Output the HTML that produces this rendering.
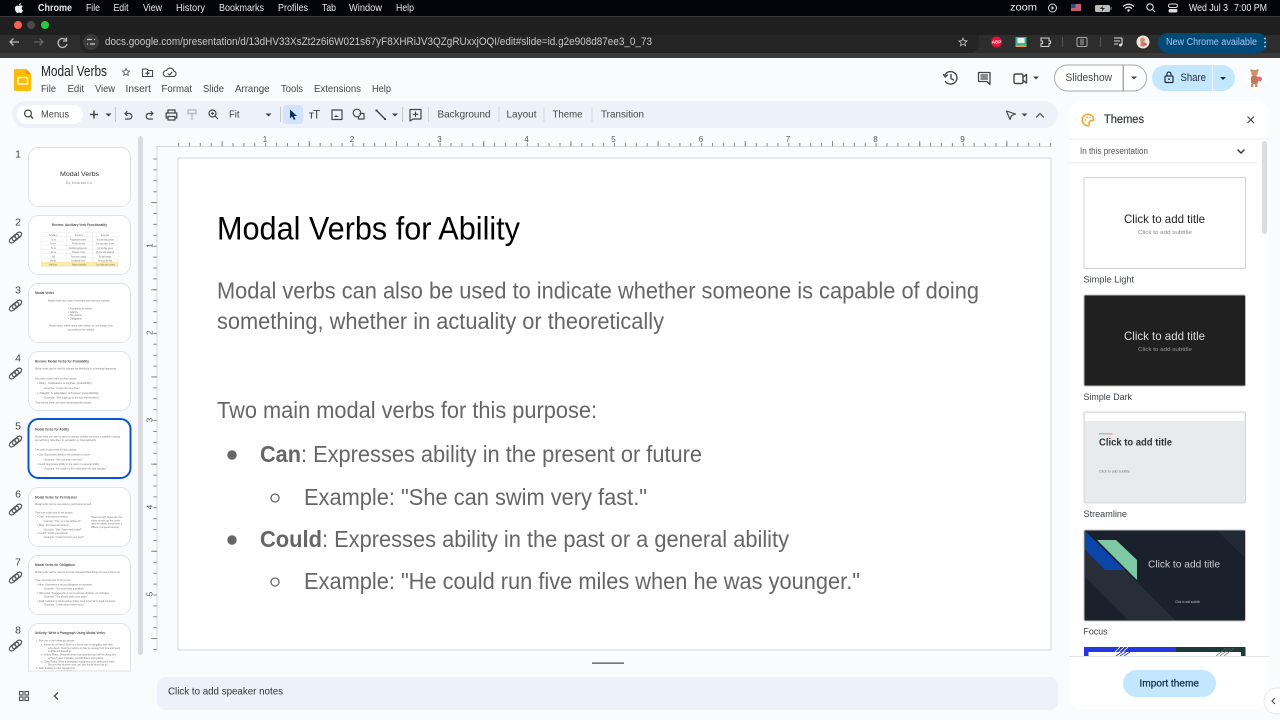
<!DOCTYPE html>
<html lang="en"><head><meta charset="utf-8"><title>Modal Verbs</title>
<style>
html,body{margin:0;padding:0;background:#f9fbfd;width:1280px;height:720px;overflow:hidden}
svg{display:block;filter:blur(.35px)}
text{font-family:"Liberation Sans",sans-serif;dominant-baseline:central;transform:translateY(.5px)}
.mb{font-size:10px;fill:#e8e8e8}
.m{font-size:10.5px;fill:#444746}
.t{font-size:10.5px;fill:#444746}
.th{font-size:2.8px;fill:#777}
.tb{font-size:3.2px;fill:#555;font-weight:bold}
.n{font-size:11px;fill:#444746}
.r{font-size:8px;fill:#555;transform:none}
.s{font-size:23px;fill:#666;transform:translateY(-.4px)}
.big{transform:translateY(-.4px)}
.l{font-size:9.5px;fill:#3c4043}
.ic{fill:none;stroke:#444746;stroke-width:1.2;stroke-linecap:round;stroke-linejoin:round}
.f{fill:#444746}
.med{stroke-width:.25px}
</style></head><body>
<svg width="1280" height="720" viewBox="0 0 1280 720" xmlns="http://www.w3.org/2000/svg">
<defs>
<g id="lnk" fill="none" stroke="#555" stroke-width="1.2"><ellipse cx="-2.8" cy="2.3" rx="3.8" ry="2.5" transform="rotate(-40 -2.8 2.3)"/><ellipse cx="0" cy="0" rx="3.8" ry="2.5" transform="rotate(-40)"/><ellipse cx="2.8" cy="-2.3" rx="3.8" ry="2.5" transform="rotate(-40 2.8 -2.3)"/></g>
<path id="car" d="M-3 -1.5L3 -1.5L0 1.5Z"/>
<clipPath id="c8"><rect x="28" y="623" width="103" height="48"/></clipPath>
<clipPath id="cs"><rect x="1070" y="165" width="190" height="491"/></clipPath>
</defs>

<!-- mac menu bar -->
<rect width="1280" height="16.5" fill="#04050b"/>
<rect y="16" width="1280" height="1" fill="#3a3a3a"/>
<path transform="translate(13 2) scale(.5)" fill="#eee" d="M18.71 19.5c-.83 1.24-1.71 2.45-3.05 2.47-1.34.03-1.77-.79-3.29-.79-1.53 0-2 .77-3.27.82-1.31.05-2.3-1.32-3.14-2.53C4.25 17 2.94 12.45 4.7 9.39c.87-1.52 2.43-2.48 4.12-2.51 1.28-.02 2.5.87 3.29.87.78 0 2.26-1.07 3.81-.91.65.03 2.47.26 3.64 1.98-.09.06-2.17 1.28-2.15 3.81.03 3.02 2.65 4.03 2.68 4.04-.03.07-.42 1.44-1.38 2.83M13 3.5c.73-.83 1.94-1.46 2.94-1.5.13 1.17-.34 2.35-1.04 3.19-.69.85-1.83 1.51-2.95 1.42-.15-1.15.41-2.35 1.05-3.11z"/>
<text class="mb" x="38" y="8" font-weight="bold" textLength="34" lengthAdjust="spacingAndGlyphs">Chrome</text>
<text class="mb" x="86" y="8" textLength="14" lengthAdjust="spacingAndGlyphs">File</text>
<text class="mb" x="113.500" y="8" textLength="15" lengthAdjust="spacingAndGlyphs">Edit</text>
<text class="mb" x="143" y="8" textLength="19" lengthAdjust="spacingAndGlyphs">View</text>
<text class="mb" x="176" y="8" textLength="29" lengthAdjust="spacingAndGlyphs">History</text>
<text class="mb" x="219" y="8" textLength="45" lengthAdjust="spacingAndGlyphs">Bookmarks</text>
<text class="mb" x="278" y="8" textLength="30" lengthAdjust="spacingAndGlyphs">Profiles</text>
<text class="mb" x="322" y="8" textLength="14" lengthAdjust="spacingAndGlyphs">Tab</text>
<text class="mb" x="349" y="8" textLength="33" lengthAdjust="spacingAndGlyphs">Window</text>
<text class="mb" x="396" y="8" textLength="18" lengthAdjust="spacingAndGlyphs">Help</text>
<text x="1010" y="7.500" font-size="10" fill="#eee" textLength="27" lengthAdjust="spacingAndGlyphs">zoom</text>
<circle cx="1052.500" cy="8" r="4" fill="none" stroke="#ddd"/><path d="M1051.500 6L1054.500 8L1051.500 10Z" fill="#ddd"/>
<rect x="1071" y="4" width="10" height="7" fill="#c06070"/><rect x="1071" y="4" width="4.500" height="4" fill="#334a80"/>
<rect x="1095" y="5" width="15" height="7" rx="1.500" fill="#bbb"/><rect x="1110.500" y="7" width="1" height="3" fill="#999"/><path d="M1103 5.500L1100 9H1102.500L1101.500 11.500L1105 8H1102.500Z" fill="#222"/>
<path d="M1123 6.500Q1128.500 2 1134 6.500M1125 8.500Q1128.500 5.500 1132 8.500" fill="none" stroke="#eee" stroke-width="1.200"/><circle cx="1128.500" cy="10.500" r="1.200" fill="#eee"/>
<circle cx="1150" cy="7" r="3.200" fill="none" stroke="#ddd" stroke-width="1.100"/><path d="M1152.500 9.500L1155 12" stroke="#ddd" stroke-width="1.200"/>
<rect x="1168.500" y="4" width="9" height="3.500" rx="1.700" fill="none" stroke="#ddd"/><rect x="1168.500" y="9" width="9" height="3.500" rx="1.700" fill="#ddd"/>
<text x="1189" y="8" font-size="10" fill="#eee" textLength="39" lengthAdjust="spacingAndGlyphs">Wed Jul 3</text>
<text x="1234" y="8" font-size="10" fill="#eee" textLength="33" lengthAdjust="spacingAndGlyphs">7:00 PM</text>

<!-- chrome -->
<rect y="17" width="1280" height="18" fill="#1f1f1f"/>
<rect y="35" width="1280" height="23" fill="#2d2d2d"/>
<rect y="53" width="1280" height="5" fill="#3a3a3a"/>
<circle cx="18" cy="25" r="4" fill="#ff5f57"/><circle cx="31" cy="25" r="4" fill="#4a4a4a"/><circle cx="45" cy="25" r="4" fill="#28c840"/>
<path d="M80 35H979V44A9 9 0 0 1 970 53H89A9 9 0 0 1 80 44Z" fill="#242424"/>
<path d="M19 42H10M13.500 38.500L10 42L13.500 45.500" fill="none" stroke="#bbb" stroke-width="1.300"/>
<path d="M34 42H43M39.500 38.500L43 42L39.500 45.500" fill="none" stroke="#666" stroke-width="1.300"/>
<path d="M66 40A4.500 4.500 0 1 0 67 44M66.500 37.500V41H63" fill="none" stroke="#bbb" stroke-width="1.300"/>
<circle cx="91" cy="42" r="8" fill="#3a3a3a"/><path d="M87 39.500H92M94 39.500H95M87 44H88M90 44H95" stroke="#ccc" stroke-width="1.200"/>
<text x="105" y="41.500" font-size="11" fill="#c8c8c8" textLength="547" lengthAdjust="spacingAndGlyphs">docs.google.com/presentation/d/13dHV33XsZt2z6i6W021s67yF8XHRiJV3QZgRUxxjOQI/edit#slide=id.g2e908d87ee3_0_73</text>
<path transform="translate(957 36) scale(.5)" fill="#ccc" d="M22 9.240l-7.190-.62L12 2 9.190 8.630 2 9.240l5.460 4.730L5.820 21 12 17.270 18.180 21l-1.630-7.030L22 9.240zM12 15.400l-3.760 2.270 1-4.280-3.320-2.880 4.380-.38L12 6.100l1.710 4.040 4.380.38-3.320 2.880 1 4.280L12 15.400z"/>
<circle cx="996.500" cy="42" r="5.500" fill="#e0143c"/><text x="996.500" y="41.500" font-size="4.500" font-weight="bold" fill="#fff" text-anchor="middle">ABP</text>
<rect x="1015.500" y="37" width="11" height="10" fill="#3bb58e"/><rect x="1017.500" y="38" width="7" height="5" fill="#dff5ea"/><rect x="1015.500" y="45.500" width="11" height="1.500" fill="#e8a040"/>
<path d="M1041 38H1049V41H1050.500V43.500H1049V46.500H1041V43.500H1042.500V41H1041Z" fill="none" stroke="#ccc" stroke-width="1.100"/>
<rect x="1062" y="37" width="1" height="10" fill="#555"/>
<rect x="1077" y="37.500" width="10" height="9" rx="1.500" fill="none" stroke="#aaa"/><path d="M1080 40H1084M1080 42H1084M1080 44H1084" stroke="#aaa"/>
<rect x="1100" y="37" width="1" height="10" fill="#555"/>
<path d="M1114 38H1122M1114 41H1120M1114 44H1118M1122 38V45" stroke="#ddd" stroke-width="1.100" fill="none"/><circle cx="1120.500" cy="45" r="1.500" fill="#ddd"/>
<circle cx="1143" cy="42" r="6.500" fill="#efe6dc"/><circle cx="1142.500" cy="40" r="2.500" fill="#c89770"/><rect x="1140.500" y="42" width="4.500" height="4.500" rx="1.500" fill="#c8806a"/><circle cx="1145.500" cy="44" r="1.300" fill="#e0506a"/>
<rect x="1158" y="33" width="109" height="20" rx="10" fill="#004a77"/>
<text x="1166" y="42" font-size="10" fill="#a8c7fa" textLength="91" lengthAdjust="spacingAndGlyphs">New Chrome available</text>
<circle cx="1265" cy="38.500" r=".9" fill="#cde"/><circle cx="1265" cy="42.500" r=".9" fill="#cde"/><circle cx="1265" cy="46.500" r=".9" fill="#cde"/>

<!-- app header -->
<rect y="58" width="1280" height="662" fill="#f9fbfd"/>
<path d="M16 69H26L31 74V89A2 2 0 0 1 29 91H16A2 2 0 0 1 14 89V71A2 2 0 0 1 16 69Z" fill="#fbbc04"/>
<path d="M26 69L31 74H26Z" fill="#f09300"/>
<rect x="18" y="77.500" width="9.500" height="6.500" fill="none" stroke="#fff" stroke-width="1.300"/>
<text x="41" y="71.500" font-size="14.500" fill="#1f1f1f" textLength="66" lengthAdjust="spacingAndGlyphs">Modal Verbs</text>
<path transform="translate(120.500 66.500) scale(.46)" fill="#444746" d="M22 9.240l-7.190-.62L12 2 9.190 8.630 2 9.240l5.460 4.730L5.820 21 12 17.270 18.180 21l-1.630-7.030L22 9.240zM12 15.400l-3.760 2.270 1-4.280-3.320-2.880 4.380-.38L12 6.100l1.710 4.040 4.380.38-3.320 2.880 1 4.280L12 15.400z"/>
<path class="ic" style="stroke-width:1.100" d="M142.500 69H147L148.500 70.500H152.500V76.500H142.500ZM147.500 71.500V75M145.800 73.200H149.300"/>
<path class="ic" style="stroke-width:1.100" d="M166 76.500H173.500A2.700 2.700 0 0 0 174 71.200A4 4 0 0 0 166.500 70.500A3 3 0 0 0 166 76.500ZM168 73.800L169.500 75L172 72.200"/>
<text class="m" x="41" y="88.500" textLength="15" lengthAdjust="spacingAndGlyphs">File</text>
<text class="m" x="67.500" y="88.500" textLength="16.500" lengthAdjust="spacingAndGlyphs">Edit</text>
<text class="m" x="95" y="88.500" textLength="20" lengthAdjust="spacingAndGlyphs">View</text>
<text class="m" x="125.500" y="88.500" textLength="25.500" lengthAdjust="spacingAndGlyphs">Insert</text>
<text class="m" x="161.500" y="88.500" textLength="30.500" lengthAdjust="spacingAndGlyphs">Format</text>
<text class="m" x="203" y="88.500" textLength="21" lengthAdjust="spacingAndGlyphs">Slide</text>
<text class="m" x="235" y="88.500" textLength="34.500" lengthAdjust="spacingAndGlyphs">Arrange</text>
<text class="m" x="281" y="88.500" textLength="22" lengthAdjust="spacingAndGlyphs">Tools</text>
<text class="m" x="314" y="88.500" textLength="47" lengthAdjust="spacingAndGlyphs">Extensions</text>
<text class="m" x="372" y="88.500" textLength="19" lengthAdjust="spacingAndGlyphs">Help</text>

<!-- header right -->
<path class="ic" style="stroke-width:1.400" d="M945 75A6.300 6.300 0 1 1 945.500 81.500M943.500 74.500L945.200 77L947.500 75M951 74.500V78.500L953.500 80"/>
<path class="ic" style="stroke-width:1.300" d="M978.500 72.500H990V84.500L987 81.500H978.500ZM981 75H987.500M981 77H987.500M981 79H987.500"/>
<rect x="1014" y="74" width="9" height="9.500" rx="1.500" class="ic" style="stroke-width:1.400"/><path class="ic" style="stroke-width:1.400" d="M1023 77L1026.500 74.500V83L1023 80.500"/>
<use href="#car" x="1036" y="78" fill="#444746"/>
<rect x="1054.500" y="65" width="92" height="26" rx="13" fill="#fff" stroke="#a5a8ab"/>
<rect x="1122.500" y="65" width="1.500" height="26" fill="#a5a8ab"/>
<text class="n" x="1065.500" y="77.500" textLength="46.500" lengthAdjust="spacingAndGlyphs">Slideshow</text>
<use href="#car" x="1134" y="78" fill="#444746"/>
<rect x="1152" y="65" width="83" height="26" rx="13" fill="#c2e7ff"/>
<rect x="1212" y="65" width="1" height="26" fill="#eaf6ff"/>
<rect x="1165" y="76" width="8" height="6.500" rx="1" fill="none" stroke="#1f2a33" stroke-width="1.200"/><path d="M1167 76V74A2 2 0 0 1 1171 74V76" fill="none" stroke="#1f2a33" stroke-width="1.200"/><circle cx="1169" cy="79.200" r=".9" fill="#1f2a33"/>
<text x="1180.500" y="77.500" font-size="11" fill="#1f2a33" textLength="25.500" lengthAdjust="spacingAndGlyphs">Share</text>
<use href="#car" x="1223" y="78.500" fill="#1f2a33"/>
<circle cx="1256" cy="78" r="11" fill="#fff"/>
<circle cx="1254.500" cy="73" r="3.300" fill="#c89568"/><circle cx="1251.500" cy="70.500" r="1.200" fill="#b9855a"/><circle cx="1257.500" cy="70.500" r="1.200" fill="#b9855a"/>
<rect x="1251" y="76" width="7" height="8" rx="2" fill="#c8765a"/><rect x="1251" y="84" width="2.500" height="3" fill="#c89568"/><rect x="1255" y="84" width="2.500" height="3" fill="#c89568"/>
<circle cx="1259.500" cy="79" r="2.500" fill="#ee6a80"/>

<!-- toolbar -->
<rect x="12" y="101" width="1046" height="27" rx="13.500" fill="#edf2fa"/>
<rect x="17" y="105" width="66" height="19" rx="9.500" fill="#fff"/>
<circle cx="28" cy="113.500" r="3.400" fill="none" stroke="#444746" stroke-width="1.200"/><path d="M30.500 116L33 118.500" stroke="#444746" stroke-width="1.400"/>
<text class="t" x="41" y="114" textLength="28" lengthAdjust="spacingAndGlyphs">Menus</text>
<path d="M90 114.500H98M94 110.500V118.500" stroke="#444746" stroke-width="1.500"/>
<use href="#car" x="108.500" y="115" fill="#444746"/>
<rect x="115" y="107" width="1" height="15" fill="#c7c7c7"/>
<path class="ic" d="M125 113.500H129.500A2.800 2.800 0 0 1 129.500 119H125.500M125 113.500L127 111.500M125 113.500L127 115.500"/>
<path class="ic" d="M153 113.500H148.500A2.800 2.800 0 0 0 148.500 119H152.500M153 113.500L151 111.500M153 113.500L151 115.500"/>
<path class="ic" style="stroke-width:1.300" d="M168 113V110H175V113M168 118H166.200V113H176.800V118H175M168 116.500H175V120H168Z"/>
<path d="M188 110H196V113.500H188ZM192 113.500V115.500M192 115.500V120" fill="none" stroke="#b9bcbf" stroke-width="1.400"/>
<circle cx="212.500" cy="113.500" r="3.500" fill="none" stroke="#444746" stroke-width="1.200"/><path d="M215 116L218 119M211 113.500H214M212.500 112V115" stroke="#444746" stroke-width="1.100"/>
<text class="t" x="229" y="114" textLength="10.500" lengthAdjust="spacingAndGlyphs">Fit</text>
<use href="#car" x="268.500" y="115" fill="#444746"/>
<rect x="280" y="107" width="1" height="15" fill="#c7c7c7"/>
<rect x="283" y="105" width="20" height="19" rx="3" fill="#d3e3fd"/>
<path d="M290 109.500V118.500L292 116.500L294 120L295.500 119L293.800 116H297Z" fill="#0b2f5e"/>
<text x="309" y="115.500" font-size="8" font-weight="bold" fill="#444746">T</text><text x="313" y="114" font-size="12" fill="#444746">T</text>
<rect x="332" y="110" width="10" height="9.500" class="ic"/><path d="M334 117L336 115L338 116.500L340 117Z" fill="#444746"/>
<circle cx="357" cy="113" r="3.800" class="ic"/><path class="ic" d="M360 113.500H364V119H358.500V116.500"/>
<path d="M376.500 110.500L385 119" stroke="#444746" stroke-width="1.500"/><rect x="375.500" y="109.500" width="2" height="2" fill="#444746"/><rect x="384" y="118" width="2" height="2" fill="#444746"/>
<use href="#car" x="395" y="115" fill="#444746"/>
<rect x="402" y="107" width="1" height="15" fill="#c7c7c7"/>
<path class="ic" d="M410 109.500H421V119H413L410 121ZM415.500 112V116.500M413.200 114.300H417.800"/>
<rect x="428" y="107" width="1" height="15" fill="#d5d6d8"/>
<text class="t" x="437.500" y="114" textLength="53" lengthAdjust="spacingAndGlyphs">Background</text>
<rect x="498.500" y="107" width="1" height="15" fill="#d5d6d8"/>
<text class="t" x="506.500" y="114" textLength="30" lengthAdjust="spacingAndGlyphs">Layout</text>
<rect x="543.500" y="107" width="1" height="15" fill="#d5d6d8"/>
<text class="t" x="552.500" y="114" textLength="30" lengthAdjust="spacingAndGlyphs">Theme</text>
<rect x="591.500" y="107" width="1" height="15" fill="#d5d6d8"/>
<text class="t" x="601" y="114" textLength="43" lengthAdjust="spacingAndGlyphs">Transition</text>
<path class="ic" style="stroke-width:1.100" d="M1006.500 111L1015.500 114L1011.500 115.500L1010 119.500Z"/>
<use href="#car" x="1024.500" y="115" fill="#444746"/>
<path class="ic" d="M1036.500 117L1040 113.500L1043.500 117"/>

<!-- filmstrip -->
<rect x="138" y="136" width="5" height="519" rx="2.500" fill="#dadce0"/>
<g text-anchor="middle">
<text x="18" y="154" font-size="10.500" fill="#444746">1</text><text x="18" y="222" font-size="10.500" fill="#444746">2</text><text x="18" y="290" font-size="10.500" fill="#444746">3</text><text x="18" y="358" font-size="10.500" fill="#444746">4</text><text x="18" y="426" font-size="10.500" fill="#444746">5</text><text x="18" y="494" font-size="10.500" fill="#444746">6</text><text x="18" y="562" font-size="10.500" fill="#444746">7</text><text x="18" y="630" font-size="10.500" fill="#444746">8</text>
</g>
<use href="#lnk" x="15.500" y="237.500"/><use href="#lnk" x="15.500" y="305.500"/><use href="#lnk" x="15.500" y="373.500"/><use href="#lnk" x="15.500" y="441.500"/><use href="#lnk" x="15.500" y="509.500"/><use href="#lnk" x="15.500" y="577.500"/><use href="#lnk" x="15.500" y="645.500"/>

<g fill="#fff" stroke="#dfe1e4">
<rect x="28.500" y="147.500" width="102" height="59" rx="10"/>
<rect x="28.500" y="215.500" width="102" height="59" rx="10"/>
<rect x="28.500" y="283.500" width="102" height="59" rx="10"/>
<rect x="28.500" y="351.500" width="102" height="59" rx="10"/>
<rect x="28.500" y="487.500" width="102" height="59" rx="10"/>
<rect x="28.500" y="555.500" width="102" height="59" rx="10"/>
<path d="M28.500 671V633.500A10 10 0 0 1 38.500 623.500H120.500A10 10 0 0 1 130.500 633.500V671Z"/>
</g>
<rect x="28.500" y="419" width="102" height="59" rx="10" fill="#fff" stroke="#0b57d0" stroke-width="2"/>

<!-- thumb 1 -->
<text x="60" y="174" font-size="6.700" fill="#333" textLength="39" lengthAdjust="spacingAndGlyphs">Modal Verbs</text>
<text x="66" y="182.500" font-size="3.200" fill="#999" textLength="26" lengthAdjust="spacingAndGlyphs">By Miranda Cu</text>
<!-- thumb 2 -->
<text class="tb" x="52" y="224.500" textLength="55" lengthAdjust="spacingAndGlyphs">Review: Auxiliary Verb Functionality</text>
<rect x="41" y="262" width="77" height="4.500" fill="#ffeb9c"/>
<path d="M41 232.500H118M41 236.700H118M41 241H118M41 245.200H118M41 249.500H118M41 253.700H118M41 258H118M41 262H118M41 266.500H118M41 232.500V266.500M66.500 232.500V266.500M92.500 232.500V266.500M118 232.500V266.500" stroke="#e8e8e8" stroke-width=".5" fill="none"/>
<g>
<text class="th" x="49" y="234.600" textLength="8" lengthAdjust="spacingAndGlyphs">Auxiliary</text><text class="th" x="75" y="234.600" textLength="8" lengthAdjust="spacingAndGlyphs">Function</text><text class="th" x="101" y="234.600" textLength="8" lengthAdjust="spacingAndGlyphs">Example</text>
<text class="th" x="51" y="238.800" textLength="5" lengthAdjust="spacingAndGlyphs">To be</text><text class="th" x="70" y="238.800" textLength="16" lengthAdjust="spacingAndGlyphs">Progressive tenses</text><text class="th" x="96" y="238.800" textLength="18" lengthAdjust="spacingAndGlyphs">I am learning to sew</text>
<text class="th" x="50" y="243" textLength="6" lengthAdjust="spacingAndGlyphs">To have</text><text class="th" x="72" y="243" textLength="13" lengthAdjust="spacingAndGlyphs">Perfect tenses</text><text class="th" x="96" y="243" textLength="18" lengthAdjust="spacingAndGlyphs">She has eaten dinner</text>
<text class="th" x="51" y="247.300" textLength="5" lengthAdjust="spacingAndGlyphs">To do</text><text class="th" x="69" y="247.300" textLength="18" lengthAdjust="spacingAndGlyphs">Emphasis/negative/question</text><text class="th" x="97" y="247.300" textLength="16" lengthAdjust="spacingAndGlyphs">I do not like green</text>
<text class="th" x="51" y="251.500" textLength="5" lengthAdjust="spacingAndGlyphs">To be</text><text class="th" x="72" y="251.500" textLength="13" lengthAdjust="spacingAndGlyphs">Passive voice</text><text class="th" x="96" y="251.500" textLength="18" lengthAdjust="spacingAndGlyphs">My car was washed</text>
<text class="th" x="52" y="255.800" textLength="3" lengthAdjust="spacingAndGlyphs">Will</text><text class="th" x="71" y="255.800" textLength="15" lengthAdjust="spacingAndGlyphs">Future tense, certainty</text><text class="th" x="99" y="255.800" textLength="12" lengthAdjust="spacingAndGlyphs">It will rain</text>
<text class="th" x="50" y="260" textLength="6" lengthAdjust="spacingAndGlyphs">Would</text><text class="th" x="71" y="260" textLength="14" lengthAdjust="spacingAndGlyphs">Conditional tense</text><text class="th" x="98" y="260" textLength="14" lengthAdjust="spacingAndGlyphs">He would like that</text>
<text class="th" x="49" y="264" textLength="8" lengthAdjust="spacingAndGlyphs">Might/may</text><text class="th" x="72" y="264" textLength="14" lengthAdjust="spacingAndGlyphs">Weak possibility</text><text class="th" x="96" y="264" textLength="19" lengthAdjust="spacingAndGlyphs">You might want to leave</text>
</g>
<!-- thumb 3 -->
<text class="tb" x="35" y="292.500" textLength="19" lengthAdjust="spacingAndGlyphs">Modal Verbs</text>
<text class="th" x="48" y="300" textLength="62" lengthAdjust="spacingAndGlyphs">Modal verbs are a type of auxiliary verb that can express:</text>
<text class="th" x="68" y="308" textLength="24" lengthAdjust="spacingAndGlyphs">• Probability of events</text>
<text class="th" x="68" y="311.500" textLength="10" lengthAdjust="spacingAndGlyphs">• Ability</text>
<text class="th" x="68" y="314.700" textLength="14" lengthAdjust="spacingAndGlyphs">• Permission</text>
<text class="th" x="68" y="318" textLength="14" lengthAdjust="spacingAndGlyphs">• Obligation</text>
<text class="th" x="49" y="325" textLength="64" lengthAdjust="spacingAndGlyphs">Modal verbs, unlike many other verbs, do not change form</text>
<text class="th" x="68" y="329" textLength="26" lengthAdjust="spacingAndGlyphs">according to the subject</text>
<!-- thumb 4 -->
<text class="tb" x="35" y="361" textLength="54" lengthAdjust="spacingAndGlyphs">Review: Modal Verbs for Probability</text>
<text class="th" x="35" y="368" textLength="81" lengthAdjust="spacingAndGlyphs">Modal verbs can be used to indicate the likelihood of something happening</text>
<text class="th" x="35" y="378" textLength="42" lengthAdjust="spacingAndGlyphs">Two main modal verbs for this purpose:</text>
<text class="th" x="37" y="382.500" textLength="55" lengthAdjust="spacingAndGlyphs">• May: Indicates a higher possibility</text>
<text class="th" x="43" y="387.500" textLength="37" lengthAdjust="spacingAndGlyphs">◦ Example: "It may rain tomorrow."</text>
<text class="th" x="37" y="392.500" textLength="62" lengthAdjust="spacingAndGlyphs">• Might: Indicates a lower possibility</text>
<text class="th" x="43" y="397" textLength="57" lengthAdjust="spacingAndGlyphs">◦ Example: "She might go to the zoo this weekend."</text>
<text class="th" x="35" y="402" textLength="56" lengthAdjust="spacingAndGlyphs">*Sometimes these are used interchangeably though</text>
<!-- thumb 5 -->
<text class="tb" x="35" y="429" textLength="34" lengthAdjust="spacingAndGlyphs">Modal Verbs for Ability</text>
<text class="th" x="35" y="436" textLength="85" lengthAdjust="spacingAndGlyphs">Modal verbs can also be used to indicate whether someone is capable of doing</text>
<text class="th" x="35" y="439.500" textLength="61" lengthAdjust="spacingAndGlyphs">something, whether in actuality or theoretically</text>
<text class="th" x="35" y="449" textLength="42" lengthAdjust="spacingAndGlyphs">Two main modal verbs for this purpose:</text>
<text class="th" x="37" y="454" textLength="53" lengthAdjust="spacingAndGlyphs">• Can: Expresses ability in the present or future</text>
<text class="th" x="43" y="459" textLength="40" lengthAdjust="spacingAndGlyphs">◦ Example: "She can swim very fast."</text>
<text class="th" x="37" y="463.500" textLength="62" lengthAdjust="spacingAndGlyphs">• Could: Expresses ability in the past or a general ability</text>
<text class="th" x="43" y="468" textLength="64" lengthAdjust="spacingAndGlyphs">◦ Example: "He could run five miles when he was younger."</text>
<!-- thumb 6 -->
<text class="tb" x="35" y="497" textLength="42" lengthAdjust="spacingAndGlyphs">Modal Verbs for Permission</text>
<text class="th" x="35" y="503.500" textLength="56" lengthAdjust="spacingAndGlyphs">Modal verbs can be used ask for permission as well</text>
<text class="th" x="35" y="512" textLength="38" lengthAdjust="spacingAndGlyphs">Three main modal verbs for this purpose:</text>
<text class="th" x="37" y="516" textLength="31" lengthAdjust="spacingAndGlyphs">• Can*: Informal permission</text>
<text class="th" x="43" y="520.500" textLength="38" lengthAdjust="spacingAndGlyphs">◦ Example: "Can I go to the bathroom?"</text>
<text class="th" x="37" y="524.500" textLength="32" lengthAdjust="spacingAndGlyphs">• May: Formal permission</text>
<text class="th" x="43" y="529" textLength="39" lengthAdjust="spacingAndGlyphs">◦ Example: "May I leave early today?"</text>
<text class="th" x="37" y="532.500" textLength="31" lengthAdjust="spacingAndGlyphs">• Could*: Polite permission</text>
<text class="th" x="43" y="536.500" textLength="41" lengthAdjust="spacingAndGlyphs">◦ Example: "Could I borrow your pen?"</text>
<text class="th" x="91" y="516.500" textLength="31" lengthAdjust="spacingAndGlyphs">*Even though these are the</text>
<text class="th" x="91" y="520" textLength="29" lengthAdjust="spacingAndGlyphs">same words as the ones</text>
<text class="th" x="91" y="523" textLength="31" lengthAdjust="spacingAndGlyphs">used for ability, these have a</text>
<text class="th" x="91" y="526.500" textLength="28" lengthAdjust="spacingAndGlyphs">different purpose/meaning</text>
<!-- thumb 7 -->
<text class="tb" x="35" y="564.500" textLength="40" lengthAdjust="spacingAndGlyphs">Modal Verbs for Obligation</text>
<text class="th" x="35" y="571.500" textLength="85" lengthAdjust="spacingAndGlyphs">Modal verbs can be used to express requests/offers/things someone has to do</text>
<text class="th" x="35" y="579.500" textLength="36" lengthAdjust="spacingAndGlyphs">Three main modal verbs for this purpose:</text>
<text class="th" x="37" y="584" textLength="55" lengthAdjust="spacingAndGlyphs">• Must: Expresses a strong obligation or necessity</text>
<text class="th" x="43" y="588" textLength="42" lengthAdjust="spacingAndGlyphs">◦ Example: "You must wear a seatbelt."</text>
<text class="th" x="37" y="592.500" textLength="72" lengthAdjust="spacingAndGlyphs">• Should: Suggests a recommendation or advice</text>
<text class="th" x="43" y="596" textLength="45" lengthAdjust="spacingAndGlyphs">◦ Example: "You should drink more water."</text>
<text class="th" x="37" y="600.500" textLength="78" lengthAdjust="spacingAndGlyphs">• Shall: Indicates a future action (often used in formal or legal contexts)</text>
<text class="th" x="43" y="604" textLength="42" lengthAdjust="spacingAndGlyphs">◦ Example: "I shall return before noon."</text>
<!-- thumb 8 -->
<g clip-path="url(#c8)">
<text class="tb" x="35" y="632.500" textLength="70" lengthAdjust="spacingAndGlyphs">Activity: Write a Paragraph Using Modal Verbs</text>
<text class="th" x="36" y="640" textLength="39" lengthAdjust="spacingAndGlyphs">1. Pick one of the following prompts:</text>
<text class="th" x="41" y="644" textLength="72" lengthAdjust="spacingAndGlyphs">a. Advice for a Friend: Write to a friend who is struggling with their</text>
<text class="th" x="48" y="647.500" textLength="72" lengthAdjust="spacingAndGlyphs">schoolwork. Give them advice on how to manage their time and study</text>
<text class="th" x="48" y="650.500" textLength="24" lengthAdjust="spacingAndGlyphs">effectively.</text>
<text class="th" x="41" y="654" textLength="75" lengthAdjust="spacingAndGlyphs">b. Future Plans: Describe what new activities you will be doing this</text>
<text class="th" x="48" y="657.500" textLength="56" lengthAdjust="spacingAndGlyphs">school year. Include possibilities and plans.</text>
<text class="th" x="41" y="661" textLength="74" lengthAdjust="spacingAndGlyphs">c. Class Rules: Write a paragraph explaining your classroom rules.</text>
<text class="th" x="48" y="664" textLength="60" lengthAdjust="spacingAndGlyphs">Discuss what students must, can, and should/should not do.</text>
<text class="th" x="36" y="667.500" textLength="39" lengthAdjust="spacingAndGlyphs">2. Start drafting on this Google Doc</text>
<text class="th" x="41" y="671" textLength="66" lengthAdjust="spacingAndGlyphs">a. Remember to SELF EDIT the document before beginning</text>
</g>
<g fill="none" stroke="#444746" stroke-width="1.100"><rect x="19.500" y="691.500" width="3.500" height="3.500"/><rect x="25" y="691.500" width="3.500" height="3.500"/><rect x="19.500" y="697" width="3.500" height="3.500"/><rect x="25" y="697" width="3.500" height="3.500"/><path d="M58 692.500L54.500 696L58 699.500" stroke-width="1.300"/></g>

<!-- rulers -->
<path d="M157 650V146.500H1051" fill="none" stroke="#d8d9db"/>
<line x1="178" x2="1051" y1="144.700" y2="144.700" stroke="#8a8a8a" stroke-width="3.500" stroke-dasharray="1 9.900"/>
<line x1="221.600" x2="1051" y1="143.700" y2="143.700" stroke="#8a8a8a" stroke-width="5.500" stroke-dasharray="1 86.200"/>
<line x1="155" x2="155" y1="158.500" y2="650" stroke="#8a8a8a" stroke-width="3.500" stroke-dasharray="1 9.900"/>
<line x1="154" x2="154" y1="202" y2="650" stroke="#8a8a8a" stroke-width="5.500" stroke-dasharray="1 86.200"/>
<g text-anchor="middle">
<text class="r" x="265" y="139.500">1</text><text class="r" x="352" y="139.500">2</text><text class="r" x="439.500" y="139.500">3</text><text class="r" x="526.500" y="139.500">4</text><text class="r" x="613.500" y="139.500">5</text><text class="r" x="701" y="139.500">6</text><text class="r" x="788" y="139.500">7</text><text class="r" x="875.500" y="139.500">8</text><text class="r" x="962.500" y="139.500">9</text>
<g transform="translate(150 245.500) rotate(-90)"><text class="r">1</text></g><g transform="translate(150 332.700) rotate(-90)"><text class="r">2</text></g><g transform="translate(150 420) rotate(-90)"><text class="r">3</text></g><g transform="translate(150 507) rotate(-90)"><text class="r">4</text></g><g transform="translate(150 594) rotate(-90)"><text class="r">5</text></g>
</g>

<!-- slide -->
<rect x="178" y="158" width="873" height="492" fill="#fff" stroke="#d6d7d9"/>
<text class="big" x="217" y="229" font-size="32" fill="#000" textLength="303" lengthAdjust="spacingAndGlyphs">Modal Verbs for Ability</text>
<text class="s" x="217" y="291" textLength="762" lengthAdjust="spacingAndGlyphs">Modal verbs can also be used to indicate whether someone is capable of doing</text>
<text class="s" x="217" y="321.500" textLength="447" lengthAdjust="spacingAndGlyphs">something, whether in actuality or theoretically</text>
<text class="s" x="217" y="410.500" textLength="380" lengthAdjust="spacingAndGlyphs">Two main modal verbs for this purpose:</text>
<circle cx="232" cy="455" r="4.700" fill="#666"/>
<text class="s" x="260" y="454.500" font-weight="bold" textLength="41" lengthAdjust="spacingAndGlyphs">Can</text>
<text class="s" x="301" y="454.500" textLength="401" lengthAdjust="spacingAndGlyphs">: Expresses ability in the present or future</text>
<circle cx="275" cy="498" r="4" fill="none" stroke="#666" stroke-width="1.300"/>
<text class="s" x="304" y="497.500" textLength="343" lengthAdjust="spacingAndGlyphs">Example: "She can swim very fast."</text>
<circle cx="232" cy="540" r="4.700" fill="#666"/>
<text class="s" x="260" y="539.500" font-weight="bold" textLength="62" lengthAdjust="spacingAndGlyphs">Could</text>
<text class="s" x="322" y="539.500" textLength="467" lengthAdjust="spacingAndGlyphs">: Expresses ability in the past or a general ability</text>
<circle cx="275" cy="582" r="4" fill="none" stroke="#666" stroke-width="1.300"/>
<text class="s" x="304" y="581.500" textLength="556" lengthAdjust="spacingAndGlyphs">Example: "He could run five miles when he was younger."</text>

<!-- notes -->
<rect x="592" y="662.500" width="32" height="1.200" fill="#444"/>
<rect x="157" y="677" width="901" height="33" rx="8" fill="#edf2fa"/>
<text x="168" y="691" font-size="10.500" fill="#333" textLength="115" lengthAdjust="spacingAndGlyphs">Click to add speaker notes</text>

<!-- themes -->
<rect x="1069" y="101" width="200" height="608" rx="12" fill="#fff"/>
<circle cx="1088" cy="120" r="5.800" fill="none" stroke="#f4a52b" stroke-width="1.500"/><rect x="1088" y="120.500" width="7" height="6.500" fill="#fff"/><path d="M1093.800 120.500C1092 120 1089.500 120.500 1089 123C1089 125 1089.500 125.800 1088 125.800" fill="none" stroke="#f4a52b" stroke-width="1.500"/><circle cx="1085.500" cy="120" r=".9" fill="#f4a52b"/><circle cx="1087" cy="117.300" r=".9" fill="#f4a52b"/><circle cx="1090" cy="117.500" r=".9" fill="#f4a52b"/>
<text class="med" x="1104" y="119.500" font-size="11.500" fill="#3c4043" stroke="#3c4043" textLength="40" lengthAdjust="spacingAndGlyphs">Themes</text>
<path d="M1247.500 116.500L1254 123M1254 116.500L1247.500 123" stroke="#444746" stroke-width="1.200"/>
<rect x="1069" y="138.500" width="200" height="1.500" fill="#f1f3f4"/>
<text x="1080" y="150.500" font-size="9" fill="#555" textLength="68" lengthAdjust="spacingAndGlyphs">In this presentation</text>
<path d="M1237.500 149.500L1241 153L1244.500 149.500" fill="none" stroke="#333" stroke-width="1.400"/>
<rect x="1069" y="162" width="189" height="1.500" fill="#f1f3f4"/>
<rect x="1262" y="141" width="5" height="93" rx="2.500" fill="#dadce0"/>
<g clip-path="url(#cs)">
<rect x="1084" y="177.500" width="161.500" height="91" rx="1.500" fill="#fff" stroke="#cfd0d2"/>
<text x="1124" y="218.500" font-size="12" fill="#222" textLength="81" lengthAdjust="spacingAndGlyphs">Click to add title</text>
<text x="1138" y="232.500" font-size="5.500" fill="#888" textLength="54" lengthAdjust="spacingAndGlyphs">Click to add subtitle</text>
<rect x="1084" y="295" width="161.500" height="91" rx="1.500" fill="#202020" stroke="#bbb"/>
<text x="1124" y="335.500" font-size="12" fill="#ddd" textLength="81" lengthAdjust="spacingAndGlyphs">Click to add title</text>
<text x="1138" y="349.500" font-size="5.500" fill="#999" textLength="54" lengthAdjust="spacingAndGlyphs">Click to add subtitle</text>
<rect x="1084" y="412" width="161.500" height="91" rx="1.500" fill="#e8eaeb" stroke="#d6d7d8"/>
<rect x="1085" y="413" width="159.500" height="8" fill="#fff"/>
<rect x="1099" y="433" width="7" height="1.500" fill="#7ecfc0"/><rect x="1106" y="433" width="6.500" height="1.500" fill="#f0a890"/>
<text x="1099" y="442.500" font-size="10" font-weight="bold" fill="#333" textLength="73" lengthAdjust="spacingAndGlyphs">Click to add title</text>
<text x="1099" y="471" font-size="3.500" fill="#777" textLength="31" lengthAdjust="spacingAndGlyphs">Click to add subtitle</text>
<rect x="1084" y="530" width="161.500" height="91" rx="1.500" fill="#1a202c" stroke="#c4c6c8"/>
<path d="M1217 531H1244.500V557Z" fill="#222a35"/>
<path d="M1085 550L1105 570H1125L1175 620H1128L1085 577Z" fill="#272e38"/>
<path d="M1085 531L1125 570H1105L1085 550Z" fill="#0b45a8"/>
<path d="M1097 540H1116L1137 560V580Z" fill="#7fc8a4"/>
<text x="1148" y="564" font-size="10.500" fill="#ccc" textLength="72" lengthAdjust="spacingAndGlyphs">Click to add title</text>
<text x="1175" y="601.500" font-size="3.500" fill="#bbb" textLength="25" lengthAdjust="spacingAndGlyphs">Click to add subtitle</text>
<rect x="1084" y="647" width="161.500" height="20" fill="#2438e0"/>
<rect x="1176" y="647" width="69.500" height="20" fill="#1d3a3a"/>
<rect x="1088.500" y="652" width="152.500" height="15" fill="#fff"/>
<path d="M1115 652L1120 647M1119 652L1124 647M1123 652L1128 647" stroke="#fff" stroke-width=".8" fill="none"/>
<path d="M1116 656L1122 652M1120 656L1126 652M1124 656L1130 652" stroke="#2438e0" stroke-width=".8" fill="none"/>
<path d="M1216 656L1226 648M1220 656L1230 648M1224 656L1234 648" stroke="#666" stroke-width=".7" fill="none"/>
</g>
<text class="l" x="1083.500" y="279.500" textLength="50.500" lengthAdjust="spacingAndGlyphs">Simple Light</text>
<text class="l" x="1083.500" y="397" textLength="48.500" lengthAdjust="spacingAndGlyphs">Simple Dark</text>
<text class="l" x="1083.500" y="514" textLength="43.500" lengthAdjust="spacingAndGlyphs">Streamline</text>
<text class="l" x="1083.500" y="631.500" textLength="24" lengthAdjust="spacingAndGlyphs">Focus</text>
<rect x="1069" y="656" width="200" height="1" fill="#e3e4e6"/>
<rect x="1123" y="670" width="93" height="27" rx="13.500" fill="#c2e7ff"/>
<text class="med" x="1139.500" y="683" font-size="10.500" fill="#0b2f4a" stroke="#0b2f4a" textLength="59.500" lengthAdjust="spacingAndGlyphs">Import theme</text>
<circle cx="1277" cy="701" r="13" fill="#fff" stroke="#e6e7e9"/>
<path d="M1275 698L1272 701L1275 704" fill="none" stroke="#555" stroke-width="1.200"/>
</svg>
</body></html>
